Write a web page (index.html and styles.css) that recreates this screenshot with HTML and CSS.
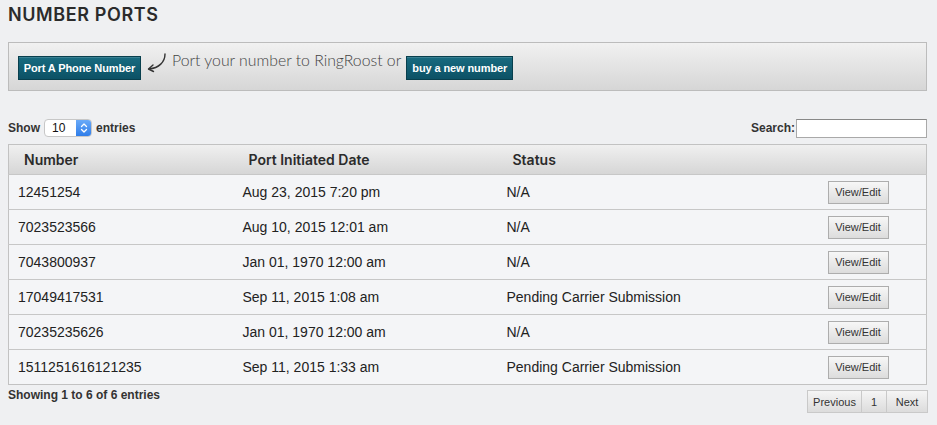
FILE: index.html
```html
<!DOCTYPE html>
<html>
<head>
<meta charset="utf-8">
<link rel="stylesheet" href="styles.css">
</head>
<body>
<div class="page">
  <h1 class="title">NUMBER PORTS</h1>
  <div class="panel">
    <button class="btn-primary">Port A Phone Number</button>
    <svg class="arrow" width="24" height="24" viewBox="0 0 24 24">
      <path d="M20 1 C20 9 14 15 4 16" fill="none" stroke="#333" stroke-width="1.4" stroke-linecap="round"/>
      <path d="M8 12 L3.5 16 L8.5 18.5" fill="none" stroke="#333" stroke-width="1.4" stroke-linecap="round" stroke-linejoin="round"/>
    </svg>
    <span class="tagline">Port your number to RingRoost or</span>
    <button class="btn-primary btn-small">buy a new number</button>
  </div>

  <div class="controls">
    <label class="length">Show
      <span class="select"><span class="select-val">10</span><span class="select-arrow"><svg width="8" height="12" viewBox="0 0 8 12"><path d="M1.5 4.5 L4 2 L6.5 4.5 M1.5 7.5 L4 10 L6.5 7.5" fill="none" stroke="#fff" stroke-width="1.3" stroke-linecap="round" stroke-linejoin="round"/></svg></span></span>
    entries</label>
    <label class="search">Search:<span class="search-input"></span></label>
  </div>

  <table class="grid">
    <colgroup>
      <col class="c1"><col class="c2"><col class="c3"><col class="c4">
    </colgroup>
    <thead>
      <tr><th>Number</th><th>Port Initiated Date</th><th>Status</th><th></th></tr>
    </thead>
    <tbody>
      <tr><td>12451254</td><td>Aug 23, 2015 7:20 pm</td><td>N/A</td><td class="act"><button class="btn-gray">View/Edit</button></td></tr>
      <tr><td>7023523566</td><td>Aug 10, 2015 12:01 am</td><td>N/A</td><td class="act"><button class="btn-gray">View/Edit</button></td></tr>
      <tr><td>7043800937</td><td>Jan 01, 1970 12:00 am</td><td>N/A</td><td class="act"><button class="btn-gray">View/Edit</button></td></tr>
      <tr><td>17049417531</td><td>Sep 11, 2015 1:08 am</td><td>Pending Carrier Submission</td><td class="act"><button class="btn-gray">View/Edit</button></td></tr>
      <tr><td>70235235626</td><td>Jan 01, 1970 12:00 am</td><td>N/A</td><td class="act"><button class="btn-gray">View/Edit</button></td></tr>
      <tr><td>1511251616121235</td><td>Sep 11, 2015 1:33 am</td><td>Pending Carrier Submission</td><td class="act"><button class="btn-gray">View/Edit</button></td></tr>
    </tbody>
  </table>

  <div class="footer">
    <div class="info">Showing 1 to 6 of 6 entries</div>
    <div class="pager">
      <span class="pg pg-prev">Previous</span><span class="pg pg-num">1</span><span class="pg pg-next">Next</span>
    </div>
  </div>
</div>
</body>
</html>
```
FILE: styles.css
```css
html, body {
  margin: 0;
  padding: 0;
  background: #eff0f2;
}
body {
  font-family: "Liberation Sans", Arial, sans-serif;
  color: #222;
}
.page {
  padding: 4px 10px 0 8px;
}
.title {
  margin: 0;
  font-family: Inter, "Noto Sans", sans-serif;
  font-weight: 600;
  font-size: 18px;
  line-height: 22px;
  letter-spacing: 0.6px;
  color: #2b2b2b;
}
.panel {
  margin-top: 16px;
  height: 49px;
  box-sizing: border-box;
  border: 1px solid #bcbcbc;
  background: linear-gradient(#f1f1f1, #d6d6d6);
  display: flex;
  align-items: center;
  padding: 2px 9px 0 9px;
}
.btn-primary {
  height: 24px;
  width: 123px;
  padding: 0;
  border: 1px solid #083f4d;
  background: linear-gradient(#186b80, #0c5165);
  color: #fff;
  font-family: "Liberation Sans", Arial, sans-serif;
  font-weight: bold;
  font-size: 11px;
  letter-spacing: -0.1px;
  box-shadow: inset 0 1px 0 rgba(255,255,255,0.15);
}
.btn-small {
  width: 107px;
  margin-left: 5px;
}
.arrow {
  margin-left: 4px;
  margin-top: -6px;
}
.tagline {
  margin-left: 3px;
  margin-top: -16px;
  font-family: Lato, "Open Sans", sans-serif;
  font-weight: 300;
  font-size: 15.8px;
  color: #444;
}
.controls {
  margin-top: 27px;
  height: 20px;
  display: flex;
  justify-content: space-between;
  align-items: center;
  font-weight: bold;
  font-size: 12px;
  color: #333;
}
.length {
  display: flex;
  align-items: center;
}
.select {
  display: inline-flex;
  width: 48px;
  height: 18px;
  box-sizing: border-box;
  margin: 0 4px 0 4px;
  background: #fff;
  border: 1px solid #c7c7c7;
  border-radius: 4px;
  overflow: hidden;
  font-weight: normal;
  color: #111;
}
.select-val {
  flex: 1;
  padding-left: 7px;
  line-height: 16px;
  font-size: 12px;
}
.select-arrow {
  width: 15px;
  background: linear-gradient(#6aaaf8, #2f7de9);
  display: flex;
  align-items: center;
  justify-content: center;
}
.search {
  display: flex;
  align-items: center;
}
.search-input {
  display: inline-block;
  width: 131px;
  height: 19px;
  box-sizing: border-box;
  background: #fff;
  border: 1px solid #a9a9a9;
  border-top-color: #888;
  margin-left: 1px;
}
.grid {
  margin-top: 6px;
  width: 919px;
  border-collapse: collapse;
  table-layout: fixed;
  border: 1px solid #c2c2c2;
  font-size: 14px;
}
.c1 { width: 225px; }
.c2 { width: 264px; }
.c3 { width: 291px; }
.c4 { width: auto; }
.grid thead tr {
  background: linear-gradient(#f0f0f0, #d5d5d5);
}
.grid th {
  height: 29px;
  padding: 0 0 0 15px;
  text-align: left;
  font-family: Inter, "Noto Sans", sans-serif;
  font-weight: 600;
  font-size: 14px;
  color: #2b2b2b;
}
.grid td {
  height: 34px;
  padding: 0 0 0 9px;
  background: #f4f5f7;
  border-top: 1px solid #c7c7c7;
  color: #222;
}
.grid td.act {
  padding: 0 0 0 39px;
}
.btn-gray {
  width: 61px;
  height: 23px;
  padding: 0;
  border: 1px solid #adadad;
  background: linear-gradient(#f7f7f7, #dcdcdc);
  font-family: "Liberation Sans", Arial, sans-serif;
  font-size: 11px;
  color: #333;
  display: block;
}
.footer {
  display: flex;
  justify-content: space-between;
  align-items: flex-start;
  margin-top: 3px;
}
.info {
  font-weight: bold;
  font-size: 12px;
  color: #333;
}
.pager {
  display: flex;
  margin-top: 2px;
  margin-right: -1px;
}
.pg {
  height: 23px;
  box-sizing: border-box;
  border: 1px solid #c9c9c9;
  background: linear-gradient(#f5f5f5, #dcdcdc);
  font-size: 11px;
  color: #333;
  display: flex;
  align-items: center;
  justify-content: center;
}
.pg-prev { width: 55px; }
.pg-num { width: 25px; border-left: 0; }
.pg-next { width: 41px; border-left: 0; }
```
